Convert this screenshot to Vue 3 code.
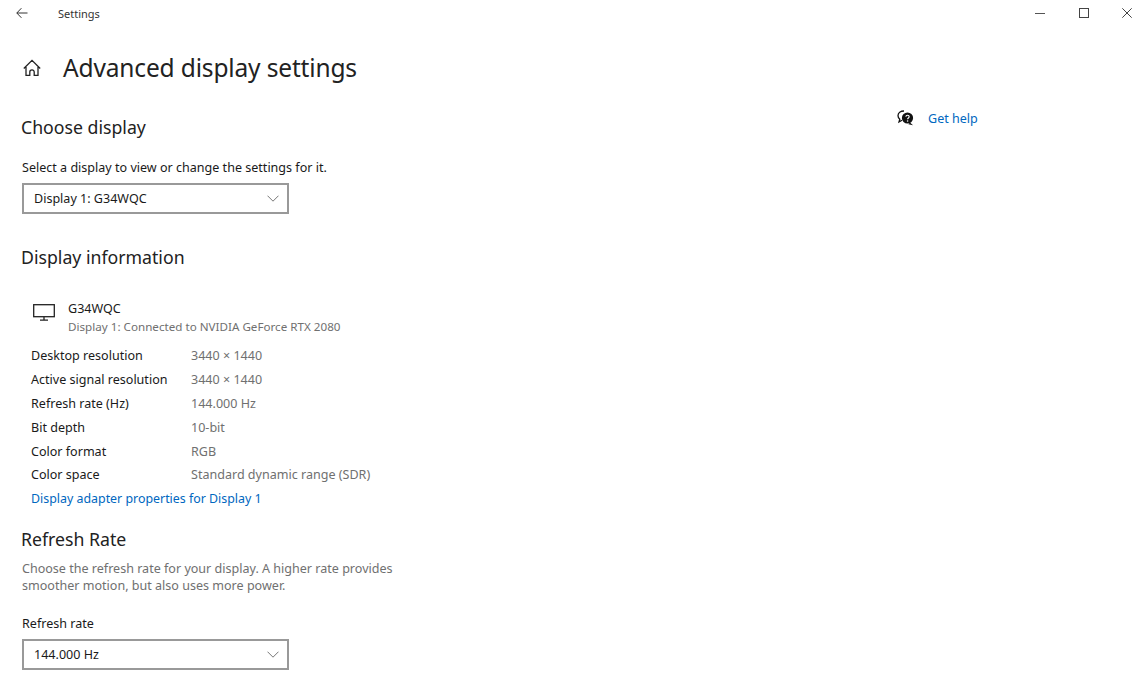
<script setup>
const rows = [
  { label: 'Desktop resolution', value: '3440 × 1440' },
  { label: 'Active signal resolution', value: '3440 × 1440' },
  { label: 'Refresh rate (Hz)', value: '144.000 Hz' },
  { label: 'Bit depth', value: '10-bit' },
  { label: 'Color format', value: 'RGB' },
  { label: 'Color space', value: 'Standard dynamic range (SDR)' },
]
</script>

<template>
  <div class="window">
    <header class="titlebar">
      <svg class="back" width="12" height="12" viewBox="0 0 12 12">
        <path d="M11.5 6H.8M5.4 1.2.8 6l4.6 4.8" fill="none" stroke="#333" stroke-width="1" />
      </svg>
      <span class="app-name">Settings</span>
      <div class="controls">
        <svg width="10" height="10" viewBox="0 0 10 10"><path d="M0 5.5h10" stroke="#555" stroke-width="1" /></svg>
        <svg width="10" height="10" viewBox="0 0 10 10"><rect x=".5" y=".5" width="9" height="9" fill="none" stroke="#444" /></svg>
        <svg width="10" height="10" viewBox="0 0 10 10"><path d="M.3.3l9.4 9.4M9.7.3.3 9.7" stroke="#444" stroke-width="1" fill="none" /></svg>
      </div>
    </header>

    <div class="page-head">
      <svg class="home" width="18" height="18" viewBox="0 0 18 18" fill="none" stroke="#222" stroke-width="1.3">
        <path d="M.8 10.500 9 2.300l8.200 8.200M3 8.300v9h3.800v-3.200a2.200 2.200 0 0 1 4.400 0v3.200H15v-9" />
      </svg>
      <h1>Advanced display settings</h1>
    </div>

    <div class="content">
      <main class="left">
        <h2 class="first">Choose display</h2>
        <label class="field-label">Select a display to view or change the settings for it.</label>
        <div class="select">
          <span>Display 1: G34WQC</span>
          <svg width="12" height="7" viewBox="0 0 12 7"><path d="M.5.7 6 6.200 11.500.7" fill="none" stroke="#777" /></svg>
        </div>

        <h2 class="info-title">Display information</h2>
        <div class="monitor">
          <svg width="22" height="17" viewBox="0 0 22 17" fill="none" stroke="#222" stroke-width="1.300">
            <rect x=".7" y=".7" width="20.600" height="12" />
            <path d="M11 13v3M7 16.200h8" />
          </svg>
          <div>
            <div class="monitor-name">G34WQC</div>
            <div class="monitor-sub">Display 1: Connected to NVIDIA GeForce RTX 2080</div>
          </div>
        </div>
        <dl class="props">
          <div v-for="row in rows" :key="row.label" class="prop">
            <dt>{{ row.label }}</dt>
            <dd>{{ row.value }}</dd>
          </div>
        </dl>
        <a class="link adapter">Display adapter properties for Display 1</a>

        <h2 class="rate-title">Refresh Rate</h2>
        <p class="desc">Choose the refresh rate for your display. A higher rate provides smoother motion, but also uses more power.</p>
        <label class="field-label rate-label">Refresh rate</label>
        <div class="select">
          <span>144.000 Hz</span>
          <svg width="12" height="7" viewBox="0 0 12 7"><path d="M.5.7 6 6.200 11.500.7" fill="none" stroke="#777" /></svg>
        </div>
      </main>

      <aside class="help">
        <svg width="17" height="16" viewBox="0 0 17 16">
          <path d="M7 1C3.600 1 1 3 1 5.700c0 1.400.7 2.600 1.800 3.500L2 12l3-1.700" fill="none" stroke="#111" stroke-width="1.300" />
          <circle cx="10.500" cy="8" r="5.600" fill="#111" />
          <path d="M13 12.500l3 2.800-4.600-1z" fill="#111" />
          <path d="M8.900 6.800c0-2.100 3.300-2.100 3.300 0 0 1.200-1.600 1.200-1.600 2.500" fill="none" stroke="#fff" stroke-width="1.100" />
          <circle cx="10.600" cy="11" r=".8" fill="#fff" />
        </svg>
        <a class="link">Get help</a>
      </aside>
    </div>
  </div>
</template>

<style scoped>
.window {
  width: 1147px;
  height: 681px;
  overflow: hidden;
  background: #fff;
  color: #1a1a1a;
  font-family: "Noto Sans", "Open Sans", sans-serif;
  font-size: 12.55px;
}

.titlebar {
  display: flex;
  align-items: center;
  height: 26px;
  padding-left: 16px;
}

.back {
  margin-right: 30px;
}

.app-name {
  font-size: 11px;
  color: #333;
}

.controls {
  display: flex;
  gap: 33.5px;
  margin-left: auto;
  padding-right: 15px;
}

.page-head {
  display: flex;
  align-items: center;
  height: 38px;
  margin-top: 22px;
  padding-left: 23px;
}

h1 {
  margin: 0 0 0 22px;
  font-size: 24.5px;
  font-weight: 400;
  letter-spacing: -0.15px;
  color: #222;
}

.content {
  display: flex;
}

.left {
  width: 898px;
  padding-left: 21px;
  box-sizing: border-box;
}

h2 {
  margin: 0;
  font-size: 17.7px;
  font-weight: 400;
  line-height: 26px;
  color: #222;
}

.first {
  margin-top: 28px;
}

.field-label {
  display: block;
  margin: 18px 0 0 1px;
  line-height: 20px;
}

.select {
  display: flex;
  align-items: center;
  justify-content: space-between;
  width: 267px;
  height: 31px;
  margin: 5px 0 0 1px;
  padding: 0 8px 0 10px;
  box-sizing: border-box;
  border: 2px solid #999;
}

.info-title {
  margin-top: 30px;
}

.monitor {
  display: flex;
  gap: 13px;
  margin: 29px 0 0 12px;
}

.monitor svg {
  margin-top: 5px;
}

.monitor-name {
  line-height: 19px;
}

.monitor-sub {
  font-size: 11.65px;
  line-height: 17px;
  color: #707070;
}

.props {
  margin: 9px 0 0 10px;
}

.prop {
  display: flex;
  height: 23.8px;
  align-items: center;
}

dt {
  width: 160px;
}

dd {
  margin: 0;
  color: #707070;
}

.link {
  color: #0067c0;
}

.adapter {
  display: block;
  margin-left: 10px;
  font-size: 12.4px;
  line-height: 24px;
}

.rate-title {
  margin-top: 15px;
}

.desc {
  width: 380px;
  margin: 8px 0 0 1px;
  line-height: 17px;
  color: #707070;
}

.rate-label {
  margin-top: 20px;
}

.help {
  display: flex;
  align-items: center;
  gap: 14px;
  height: 24px;
  margin-top: 20px;
  margin-left: -1px;
}
</style>

<style>
html,
body {
  margin: 0;
  background: #fff;
}
</style>
